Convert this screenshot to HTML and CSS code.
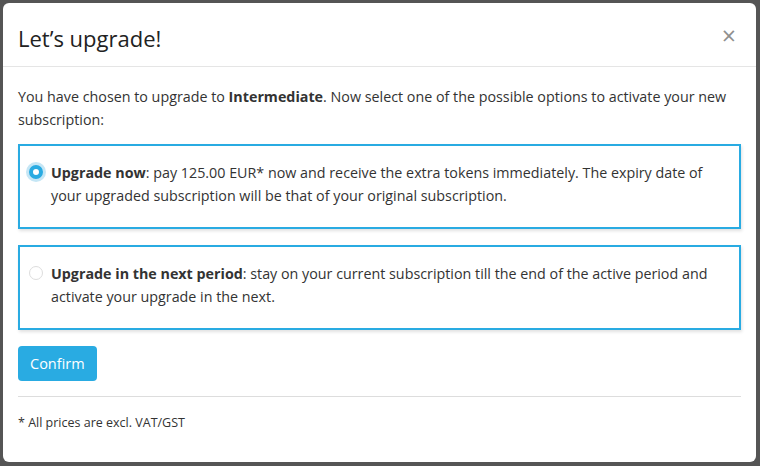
FILE: index.html
```html
<!DOCTYPE html>
<html lang="en">
<head>
<meta charset="utf-8">
<link rel="stylesheet" href="styles.css">
</head>
<body>
<div class="modal">
  <div class="modal-header">
    <h4 class="modal-title">Let’s upgrade!</h4>
    <span class="close">×</span>
  </div>
  <div class="modal-body">
    <p class="intro">You have chosen to upgrade to <b>Intermediate</b>. Now select one of the possible options to activate your new subscription:</p>
    <label class="option">
      <span class="radio checked"></span>
      <span class="option-text"><b>Upgrade now</b>: pay 125.00 EUR* now and receive the extra tokens immediately. The expiry date of your upgraded subscription will be that of your original subscription.</span>
    </label>
    <label class="option">
      <span class="radio"></span>
      <span class="option-text"><b>Upgrade in the next period</b>: stay on your current subscription till the end of the active period and activate your upgrade in the next.</span>
    </label>
    <button class="btn">Confirm</button>
    <hr class="sep">
    <p class="note">* All prices are excl. VAT/GST</p>
  </div>
</div>
</body>
</html>
```
FILE: styles.css
```css
html, body {
  margin: 0;
  padding: 0;
}
body {
  width: 760px;
  height: 466px;
  background: #555555;
  font-family: "Open Sans", "Noto Sans", sans-serif;
  color: #333333;
  overflow: hidden;
}
.modal {
  margin: 3px 4px 0 3px;
  height: 459px;
  background: #ffffff;
  border-radius: 6px;
  box-sizing: border-box;
}
.modal-header {
  display: flex;
  align-items: center;
  justify-content: space-between;
  padding: 19px 20px 11px 15px;
  border-bottom: 1px solid #e5e5e5;
}
.modal-title {
  margin: 0;
  font-size: 22px;
  line-height: 33px;
  font-weight: 400;
  color: #222222;
}
.close {
  font-size: 25px;
  line-height: 24px;
  color: #8f8f8f;
  margin-top: -8px;
}
.modal-body {
  padding: 18px 15px 0 15px;
  font-size: 14.3px;
  line-height: 23px;
}
.intro {
  margin: 0 0 13px 0;
}
.option {
  display: flex;
  align-items: flex-start;
  gap: 8px;
  border: 2px solid #29abe2;
  padding: 15px 15px 20px 8px;
  margin-bottom: 16px;
  box-shadow: 1px 2px 3px rgba(0,0,0,0.12);
}
.radio {
  flex: none;
  width: 14px;
  height: 14px;
  border-radius: 50%;
  border: 1px solid #dddddd;
  box-sizing: border-box;
  margin-top: 4px;
  margin-left: 1px;
}
.radio.checked {
  border: 4px solid #29abe2;
  background: #ffffff;
  box-shadow: 0 0 0 3px #c5e6f5;
}
.btn {
  display: block;
  margin-top: 1px;
  background: #29abe2;
  color: #ffffff;
  border: none;
  border-radius: 4px;
  font-family: inherit;
  font-size: 14.5px;
  height: 35px;
  padding: 0 12px;
}
.sep {
  border: none;
  border-top: 1px solid #dddddd;
  margin: 15px 0 0 0;
}
.note {
  margin: 14px 0 0 0;
  font-size: 12.5px;
  line-height: 23px;
}
```
